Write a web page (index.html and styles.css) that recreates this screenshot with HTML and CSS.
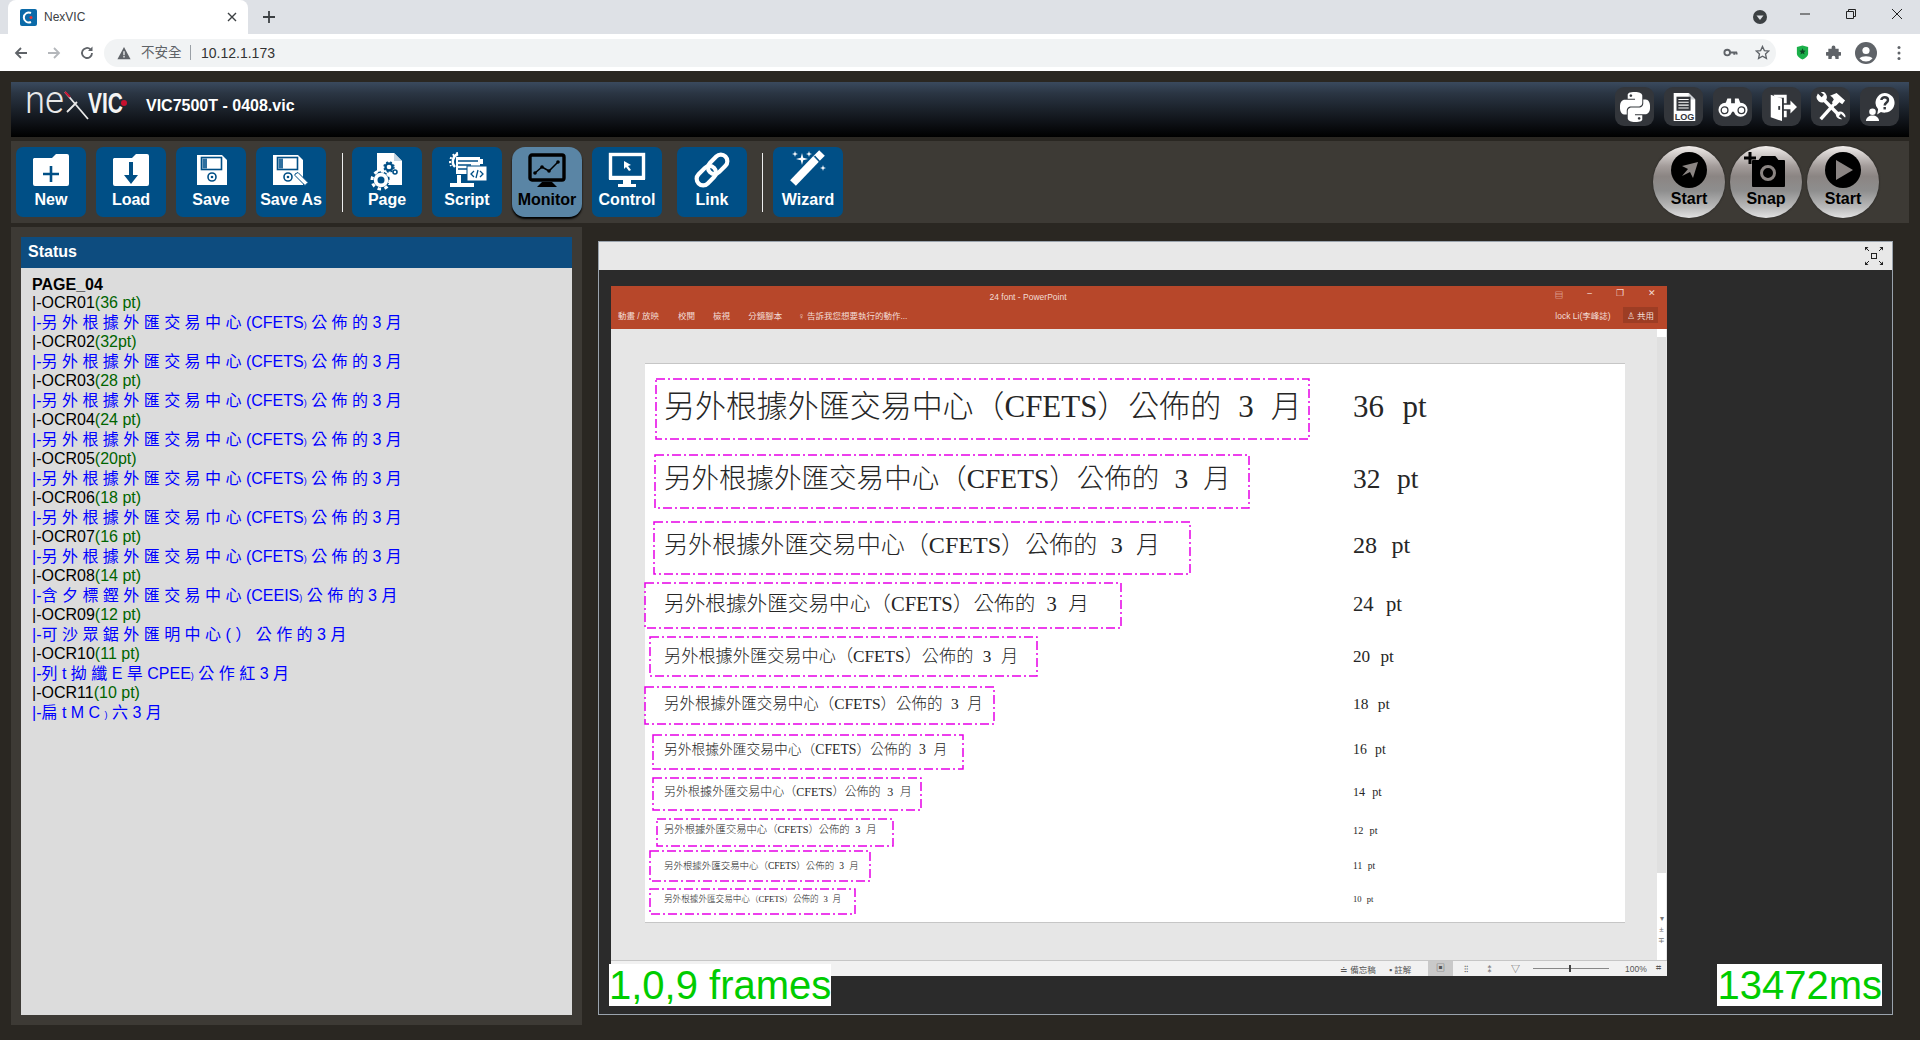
FILE: index.html
```html
<!DOCTYPE html>
<html lang="zh-Hant">
<head>
<meta charset="utf-8">
<title>NexVIC</title>
<link rel="stylesheet" href="styles.css">
</head>
<body>
<div class="tabstrip">
  <div class="tab">
    <svg class="favicon" viewBox="0 0 17 17"><rect width="17" height="17" rx="2" fill="#0b6aa8"/><path d="M11 4a5 5 0 1 0 0 9" fill="none" stroke="#fff" stroke-width="2"/><circle cx="11" cy="8.5" r="1.5" fill="#e33"/></svg>
    <span class="tab-title">NexVIC</span>
    <svg class="tab-close" viewBox="0 0 10 10"><path d="M1 1l8 8M9 1l-8 8" stroke="#3c4043" stroke-width="1.4"/></svg>
  </div>
  <svg class="newtab" viewBox="0 0 14 14"><path d="M7 1v12M1 7h12" stroke="#3c4043" stroke-width="1.8"/></svg>
  <div class="win-controls">
    <svg class="win-drop" viewBox="0 0 14 14"><circle cx="7" cy="7" r="7" fill="#3c4043"/><path d="M3.5 5.5h7L7 10z" fill="#dee1e6"/></svg>
    <svg class="win-btn" viewBox="0 0 12 12"><path d="M1 6h10" stroke="#222" stroke-width="1"/></svg>
    <svg class="win-btn" viewBox="0 0 12 12"><path d="M1.5 3.5h7v7h-7zM3.5 3.5v-2h7v7h-2" fill="none" stroke="#222"/></svg>
    <svg class="win-btn" viewBox="0 0 12 12"><path d="M1 1l10 10M11 1L1 11" stroke="#222"/></svg>
  </div>
</div>
<div class="urlbar">
  <svg class="nav" viewBox="0 0 16 16"><path d="M14 8H3M8 3L3 8l5 5" fill="none" stroke="#5f6368" stroke-width="1.8"/></svg>
  <svg class="nav" viewBox="0 0 16 16"><path d="M2 8h11M8 3l5 5-5 5" fill="none" stroke="#b4b7bb" stroke-width="1.8"/></svg>
  <svg class="nav" viewBox="0 0 16 16"><path d="M13 8a5 5 0 1 1-1.5-3.6" fill="none" stroke="#5f6368" stroke-width="1.8"/><path d="M13.5 1.5v4.5H9z" fill="#5f6368"/></svg>
  <div class="omnibox">
    <svg class="warn" viewBox="0 0 16 16"><path d="M8 1l7.5 14H.5z" fill="#5f6368"/><path d="M8 6v4.5M8 11.5v1.5" stroke="#f1f3f4" stroke-width="1.5"/></svg>
    <span class="insecure">不安全</span>
    <span class="url">10.12.1.173</span>
    <span class="omni-right">
      <svg class="omni-ic" viewBox="0 0 16 16"><circle cx="4.5" cy="8" r="3" fill="none" stroke="#5f6368" stroke-width="2"/><path d="M7 8h8M12 8v2.5M14.5 8v2" stroke="#5f6368" stroke-width="2"/></svg>
      <svg class="omni-ic" viewBox="0 0 16 16"><path d="M8 1.5l2 4.4 4.7.5-3.5 3.2 1 4.7L8 11.9l-4.200 2.400 1-4.700L1.300 6.400 6 5.900z" fill="none" stroke="#5f6368" stroke-width="1.400"/></svg>
    </span>
  </div>
  <div class="ext">
    <svg class="ext-ic ext-shield" viewBox="0 0 14 16"><path d="M1 2l6-1.500L13 2v7c0 3-3 5-6 6.500C4 14 1 12 1 9z" fill="#1bb04a"/><path d="M7 3.500l1 2.300 2.500.2-1.900 1.700.6 2.400L7 8.900l-2.200 1.200.6-2.400L3.500 6 6 5.800z" fill="#0c4a26"/></svg>
    <svg class="ext-ic" viewBox="0 0 16 16"><path d="M6 2.500a2 2 0 0 1 4 0V4h3.500v3.500H15a2 2 0 0 1 0 4h-1.500V15H10v-1.500a2 2 0 0 0-4 0V15H2.500v-3.500H1a2 2 0 0 1 0-4h1.500V4H6z" fill="#5f6368"/></svg>
    <svg class="ext-av" viewBox="0 0 22 22"><circle cx="11" cy="11" r="11" fill="#5f6368"/><circle cx="11" cy="8.500" r="3.600" fill="#fff"/><path d="M4.500 16.500c2-3 11-3 13 0a8.500 8.500 0 0 1-13 0z" fill="#fff"/></svg>
    <svg class="ext-menu" viewBox="0 0 4 16"><circle cx="2" cy="2.500" r="1.500" fill="#5f6368"/><circle cx="2" cy="8" r="1.500" fill="#5f6368"/><circle cx="2" cy="13.500" r="1.500" fill="#5f6368"/></svg>
  </div>
</div>

<div class="app">
  <header class="apphead">
    <svg class="logo" viewBox="0 0 104 34">
      <text x="1" y="25" class="logo-thin" textLength="39" lengthAdjust="spacingAndGlyphs">ne</text>
      <path d="M41 4l23 27M43 24l10-10" fill="none" stroke="#e9e9e9" stroke-width="1.800"/>
      <path d="M41 4l5 5" stroke="#c8102e" stroke-width="1.800"/>
      <text x="64" y="25" class="logo-bold" textLength="35" lengthAdjust="spacingAndGlyphs">VIC</text>
      <circle cx="100" cy="15" r="3" fill="#c8102e"/>
    </svg>
    <span class="filename">VIC7500T - 0408.vic</span>
    <nav class="tools">
      <div class="tile"><svg viewBox="0 0 24 24" class="tile-ic"><path fill="#fff" d="M14.25.18l.9.2.73.26.59.3.45.32.34.34.25.34.16.33.1.3.04.26.02.2-.01.13V8.5l-.05.63-.13.55-.21.46-.26.38-.3.31-.33.25-.35.19-.35.14-.33.1-.3.07-.26.04-.21.02H8.77l-.69.05-.59.14-.5.22-.41.27-.33.32-.27.35-.2.36-.15.37-.1.35-.07.32-.04.27-.02.21v3.06H3.17l-.21-.03-.28-.07-.32-.12-.35-.18-.36-.26-.36-.36-.35-.46-.32-.59-.28-.73-.21-.88-.14-1.05-.05-1.23.06-1.22.16-1.04.24-.87.32-.71.36-.57.4-.44.42-.33.42-.24.4-.16.36-.1.32-.05.24-.01h.16l.06.01h8.16v-.83H6.18l-.01-2.75-.02-.37.05-.34.11-.31.17-.28.25-.26.31-.23.38-.2.44-.18.51-.15.58-.12.64-.1.71-.06.77-.04.84-.02 1.27.05zm-6.3 1.98l-.23.33-.08.41.08.41.23.34.33.22.41.09.41-.09.33-.22.23-.34.08-.41-.08-.41-.23-.33-.33-.22-.41-.09-.41.09zm13.09 3.95l.28.06.32.12.35.18.36.27.36.35.35.47.32.59.28.73.21.88.14 1.04.05 1.23-.06 1.23-.16 1.04-.24.86-.32.71-.36.57-.4.45-.42.33-.42.24-.4.16-.36.09-.32.05-.24.02-.16-.01h-8.22v.82h5.84l.01 2.76.02.36-.05.34-.11.31-.17.29-.25.25-.31.24-.38.2-.44.17-.51.15-.58.13-.64.09-.71.07-.77.04-.84.01-1.27-.04-1.07-.14-.9-.2-.73-.25-.59-.3-.45-.33-.34-.34-.25-.34-.16-.33-.1-.3-.04-.25-.02-.2.01-.13v-5.34l.05-.64.13-.54.21-.46.26-.38.3-.32.33-.24.35-.2.35-.14.33-.1.3-.06.26-.04.21-.02.13-.01h5.84l.69-.05.59-.14.5-.21.41-.28.33-.32.27-.35.2-.36.15-.36.1-.35.07-.32.04-.28.02-.21V6.070h2.090l.14.010zm-6.470 14.250l-.23.33-.08.41.08.41.23.33.33.23.41.08.41-.08.33-.23.23-.33.08-.41-.08-.41-.23-.33-.33-.23-.41-.08-.41.08z"/></svg></div>
      <div class="tile"><svg viewBox="0 0 30 32" class="tile-ic"><path d="M4 1h16l7 7v23H4z" fill="#fff"/><path d="M20 1v7h7" fill="#cfd2d6"/><rect x="7" y="5" width="15" height="15" fill="#33363b"/><path d="M9 8h11M9 11h11M9 14h11M9 17h11" stroke="#fff" stroke-width="1.100"/><text x="15.500" y="30" class="log-text" text-anchor="middle" textLength="21" lengthAdjust="spacingAndGlyphs">LOG</text></svg></div>
      <div class="tile"><svg viewBox="0 0 32 24" class="tile-ic tile-wide"><path d="M10 3h4v5h4V3h4l3 8H7z" fill="#fff"/><circle cx="8" cy="15" r="7.500" fill="#fff"/><circle cx="24" cy="15" r="7.500" fill="#fff"/><rect x="13" y="9" width="6" height="8" fill="#fff"/><circle cx="7" cy="15.500" r="3.600" fill="none" stroke="#33363b" stroke-width="1.400"/><circle cx="25" cy="15.500" r="3.600" fill="none" stroke="#33363b" stroke-width="1.400"/></svg></div>
      <div class="tile"><svg viewBox="0 0 32 32" class="tile-ic"><path d="M4 3l12 4v24L4 27z" fill="#fff"/><path d="M7 3h14v9h-3V6H9zM21 20v7h-3v-7z" fill="#fff"/><rect x="12" y="15" width="2" height="4" fill="#33363b"/><path d="M18 13.500h7V9l7 7-7 7v-4.500h-7z" fill="#fff"/></svg></div>
      <div class="tile"><svg viewBox="0 0 32 32" class="tile-ic"><path d="M5 29L21 11" stroke="#fff" stroke-width="3.600"/><path d="M15 4l7-3 9 8-3 4-3-2-4 4-4-4 2-3c-1-2-2-3-4-4z" fill="#fff"/><path d="M8 8L25 25" stroke="#fff" stroke-width="3.600"/><path d="M2 1.500l4 4 2.500-2.500-4-3.500A6 6 0 0 1 11 8l-3 3A6 6 0 0 1 .500 5z" fill="#fff"/><path d="M30.500 27l-4-4-2.500 2.500 4 3.500A6 6 0 0 1 21 24l3-3a6 6 0 0 1 7.500 6z" fill="#fff"/></svg></div>
      <div class="tile"><svg viewBox="0 0 32 32" class="tile-ic"><path d="M21 1a10.500 10.500 0 1 1-4 20.200L13 24l1-5.500A10.500 10.500 0 0 1 21 1z" fill="#fff"/><path d="M17.500 8.500c0-4 7-4 7 0 0 3-3.500 3-3.500 6" fill="none" stroke="#33363b" stroke-width="2.600"/><rect x="19.700" y="16" width="2.600" height="2.600" fill="#33363b"/><circle cx="8" cy="21" r="3.500" fill="#fff"/><path d="M1 31c0-8 14-8 14 0z" fill="#fff"/></svg></div>
    </nav>
  </header>

  <section class="toolbar">
    <button class="btn"><svg viewBox="0 0 40 40"><path d="M3 7h18l4-4h11a2 2 0 0 1 2 2v28a2 2 0 0 1-2 2H4a2 2 0 0 1-2-2V8z" fill="#fff"/><path d="M20 15v16M12 23h16" stroke="#004f86" stroke-width="2.600"/></svg><span>New</span></button>
    <button class="btn"><svg viewBox="0 0 40 40"><path d="M3 7h18l4-4h11a2 2 0 0 1 2 2v28a2 2 0 0 1-2 2H4a2 2 0 0 1-2-2V8z" fill="#fff"/><path d="M18 11h4v13h5l-7 9-7-9h5z" fill="#004f86"/></svg><span>Load</span></button>
    <button class="btn"><svg viewBox="0 0 40 40"><path d="M6 4h25l5 5v25H6z" fill="#fff"/><rect x="10.500" y="6.500" width="20" height="12" fill="#fff" stroke="#004f86" stroke-width="1.600"/><rect x="11.500" y="7.500" width="4.500" height="10" fill="#2e6f9e"/><circle cx="21" cy="26" r="4" fill="none" stroke="#004f86" stroke-width="1.600"/><circle cx="21" cy="26" r="1.300" fill="#004f86"/></svg><span>Save</span></button>
    <button class="btn"><svg viewBox="0 0 40 40"><path d="M2 4h25l5 5v25H2z" fill="#fff"/><rect x="6.500" y="6.500" width="20" height="12" fill="#fff" stroke="#004f86" stroke-width="1.600"/><rect x="7.500" y="7.500" width="4.500" height="10" fill="#2e6f9e"/><circle cx="17" cy="26" r="4" fill="none" stroke="#004f86" stroke-width="1.600"/><circle cx="17" cy="26" r="1.300" fill="#004f86"/><path d="M24 23l3-1.500 10 10-3 3-10-10z" fill="#fff" stroke="#004f86" stroke-width="1"/></svg><span>Save As</span></button>
    <i class="sep"></i>
    <button class="btn"><svg viewBox="0 0 40 40"><path d="M10 2h17l8 8v24H10z" fill="#fff"/><path d="M27 2v8h8" fill="#c5d5e2"/><circle cx="14" cy="29" r="8" fill="#fff" stroke="#004f86" stroke-width="1.500"/><circle cx="14" cy="29" r="9" fill="none" stroke="#fff" stroke-width="3" stroke-dasharray="3.500 3.500"/><circle cx="14" cy="29" r="3.500" fill="#004f86"/><circle cx="22" cy="16" r="3.500" fill="none" stroke="#004f86" stroke-width="2.400"/><circle cx="22" cy="16" r="5" fill="none" stroke="#004f86" stroke-width="1.400" stroke-dasharray="2 2"/><circle cx="28" cy="21" r="2" fill="none" stroke="#004f86" stroke-width="1.600"/></svg><span>Page</span></button>
    <button class="btn"><svg viewBox="0 0 40 40"><path d="M11 3a8 8 0 0 0-3 13" fill="none" stroke="#fff" stroke-width="2.500"/><path d="M11 2a9 9 0 0 0-7 13" fill="none" stroke="#fff" stroke-width="2" stroke-dasharray="2 2"/><rect x="9" y="6" width="24" height="17" fill="#fff"/><path d="M11 10h20M11 14h13M11 18h13" stroke="#004f86" stroke-width="1.400"/><rect x="33" y="8" width="3" height="5" fill="#fff"/><rect x="20" y="15" width="20" height="15" fill="#fff" stroke="#004f86" stroke-width="1"/><path d="M27 20l-3 3 3 3M33 20l3 3-3 3M31 19l-2 8" fill="none" stroke="#004f86" stroke-width="1.300"/><rect x="10" y="24" width="4" height="9" fill="#fff"/><rect x="3" y="32" width="24" height="4" fill="#fff"/></svg><span>Script</span></button>
    <button class="btn btn-on"><svg viewBox="0 0 40 40"><rect x="3" y="4" width="34" height="25" rx="2" fill="none" stroke="#000" stroke-width="3.400"/><path d="M8 22l7-6 7 4 9-9" fill="none" stroke="#000" stroke-width="1.500"/><circle cx="8" cy="22" r="1.800"/><circle cx="15" cy="16" r="1.800"/><circle cx="22" cy="20" r="1.800"/><circle cx="31" cy="11" r="1.800"/><path d="M15 31h10l5 5H10z"/></svg><span>Monitor</span></button>
    <button class="btn"><svg viewBox="0 0 40 40"><rect x="3.500" y="3.500" width="33" height="23" fill="none" stroke="#fff" stroke-width="3.400"/><path d="M2 26h36v3H2zM16 29h8v4h5v3H11v-3h5z" fill="#fff"/><path d="M17 10l7 4-3 1 3 4-2 1-3-4-2 2z" fill="#fff"/></svg><span>Control</span></button>
    <button class="btn btn-link"><svg viewBox="0 0 40 40"><g fill="none" stroke="#fff" stroke-width="4.200" transform="rotate(-45 20 19)"><rect x="1" y="12.500" width="22" height="13" rx="6.500"/><rect x="17" y="12.500" width="22" height="13" rx="6.500"/></g></svg><span>Link</span></button>
    <i class="sep sep-b"></i>
    <button class="btn"><svg viewBox="0 0 40 40"><path d="M5 32L28 8" stroke="#fff" stroke-width="8"/><path d="M28 8l6-6" stroke="#fff" stroke-width="8"/><path d="M26.500 5l5.500 6" stroke="#004f86" stroke-width="1.400"/><path d="M14 2l1.200 4.800L20 8l-4.800 1.200L14 14l-1.200-4.800L8 8l4.800-1.200zM7 0l.7 2.300L10 3l-2.300.7L7 6l-.7-2.300L4 3l2.300-.7zM21 0l.7 2.300L24 3l-2.300.7L21 6l-.7-2.300L18 3l2.300-.7zM35 14l.7 2.300L38 17l-2.300.7L35 20l-.7-2.300L32 17l2.300-.7z" fill="#fff"/></svg><span>Wizard</span></button>
    <div class="rounds">
      <button class="round"><svg viewBox="0 0 36 36"><circle cx="18" cy="18" r="18" fill="#000"/><path d="M27 10l-5 16-3-6-8 4 6-7-6-3z" fill="#8b8583"/></svg><span>Start</span></button>
      <button class="round"><svg viewBox="0 0 40 36" class="snap-ic"><path d="M9 9h6l3-4h13l3 4h6v25H9z" fill="#000" stroke="#000" stroke-linejoin="round" stroke-width="2"/><circle cx="24" cy="21" r="6.500" fill="none" stroke="#8b8583" stroke-width="3"/><path d="M6 0v12M0 6h12" stroke="#000" stroke-width="3"/></svg><span>Snap</span></button>
      <button class="round"><svg viewBox="0 0 36 36"><circle cx="18" cy="18" r="18" fill="#000"/><path d="M11 8l17 10-17 10z" fill="#8b8583"/></svg><span>Start</span></button>
    </div>
  </section>

  <main class="main">
    <aside class="status-wrap">
      <div class="status">
        <h2 class="status-head">Status</h2>
        <div class="status-body">
          <div class="page-name">PAGE_04</div>
          <div class="rn">|-OCR01<em>(36 pt)</em></div>
          <div class="rv">|-另 外 根 據 外 匯 交 易 中 心 (CFETS<small>)</small> 公 佈 的 3 月</div>
          <div class="rn">|-OCR02<em>(32pt)</em></div>
          <div class="rv">|-另 外 根 據 外 匯 交 易 中 心 (CFETS<small>)</small> 公 佈 的 3 月</div>
          <div class="rn">|-OCR03<em>(28 pt)</em></div>
          <div class="rv">|-另 外 根 據 外 匯 交 易 中 心 (CFETS<small>)</small> 公 佈 的 3 月</div>
          <div class="rn">|-OCR04<em>(24 pt)</em></div>
          <div class="rv">|-另 外 根 據 外 匯 交 易 中 心 (CFETS<small>)</small> 公 佈 的 3 月</div>
          <div class="rn">|-OCR05<em>(20pt)</em></div>
          <div class="rv">|-另 外 根 據 外 匯 交 易 中 心 (CFETS<small>)</small> 公 佈 的 3 月</div>
          <div class="rn">|-OCR06<em>(18 pt)</em></div>
          <div class="rv">|-另 外 根 據 外 匯 交 易 巾 心 (CFETS<small>)</small> 公 佈 的 3 月</div>
          <div class="rn">|-OCR07<em>(16 pt)</em></div>
          <div class="rv">|-另 外 根 據 外 匯 交 易 中 心 (CFETS<small>)</small> 公 佈 的 3 月</div>
          <div class="rn">|-OCR08<em>(14 pt)</em></div>
          <div class="rv">|-含 夕 標 鏗 外 匯 交 易 中 心 (CEEIS<small>)</small> 公 佈 的 3 月</div>
          <div class="rn">|-OCR09<em>(12 pt)</em></div>
          <div class="rv">|-可 沙 眾 鋸 外 匯 明 中 心 ( ） 公 作 的 3 月</div>
          <div class="rn">|-OCR10<em>(11 pt)</em></div>
          <div class="rv">|-列 t 拗 纖 E 旱 CPEE<small>)</small> 公 作 紅 3 月</div>
          <div class="rn">|-OCR11<em>(10 pt)</em></div>
          <div class="rv">|-扁 t M C <small>)</small> 六 3 月</div>
        </div>
      </div>
    </aside>

    <section class="view">
      <div class="view-bar">
        <svg class="fit-ic" viewBox="0 0 20 20"><rect x="7.500" y="7.500" width="5" height="5" fill="none" stroke="#222"/><path d="M1 1l4 4M19 1l-4 4M1 19l4-4M19 19l-4-4" stroke="#222"/><path d="M1 1h3.500L1 4.500zM19 1h-3.500L19 4.500zM1 19h3.500L1 15.500zM19 19h-3.500l3.500-3.500z" fill="#222"/></svg>
      </div>
      <div class="view-body">
        <div class="shot">
          <div class="ppt-title">
            <div class="ppt-r1">
              <span class="ppt-name">24 font - PowerPoint</span>
              <span class="ppt-wins"><b>▤</b><b>–</b><b>❐</b><b>✕</b></span>
            </div>
            <div class="ppt-r2">
              <span class="t1">動畫 / 放映</span><span class="t2">校閱</span><span class="t3">檢視</span><span class="t4">分鏡腳本</span><span class="t5">♀ 告訴我您想要執行的動作...</span>
              <span class="ppt-user">lock Li(李峰誌)</span><span class="ppt-share">♙ 共用</span>
            </div>
          </div>
          <div class="ppt-work">
            <div class="slide">
              <div class="roi r1"><svg><rect width="100%" height="100%"/></svg></div>
              <div class="roi r2"><svg><rect width="100%" height="100%"/></svg></div>
              <div class="roi r3"><svg><rect width="100%" height="100%"/></svg></div>
              <div class="roi r4"><svg><rect width="100%" height="100%"/></svg></div>
              <div class="roi r5"><svg><rect width="100%" height="100%"/></svg></div>
              <div class="roi r6"><svg><rect width="100%" height="100%"/></svg></div>
              <div class="roi r7"><svg><rect width="100%" height="100%"/></svg></div>
              <div class="roi r8"><svg><rect width="100%" height="100%"/></svg></div>
              <div class="roi r9"><svg><rect width="100%" height="100%"/></svg></div>
              <div class="roi r10"><svg><rect width="100%" height="100%"/></svg></div>
              <div class="roi r11"><svg><rect width="100%" height="100%"/></svg></div>
              <div class="line l1"><span class="zh">另外根據外匯交易中心（CFETS）公佈的 3 月</span><span class="pt">36 pt</span></div>
              <div class="line l2"><span class="zh">另外根據外匯交易中心（CFETS）公佈的 3 月</span><span class="pt">32 pt</span></div>
              <div class="line l3"><span class="zh">另外根據外匯交易中心（CFETS）公佈的 3 月</span><span class="pt">28 pt</span></div>
              <div class="line l4"><span class="zh">另外根據外匯交易中心（CFETS）公佈的 3 月</span><span class="pt">24 pt</span></div>
              <div class="line l5"><span class="zh">另外根據外匯交易中心（CFETS）公佈的 3 月</span><span class="pt">20 pt</span></div>
              <div class="line l6"><span class="zh">另外根據外匯交易中心（CFETS）公佈的 3 月</span><span class="pt">18 pt</span></div>
              <div class="line l7"><span class="zh">另外根據外匯交易中心（CFETS）公佈的 3 月</span><span class="pt">16 pt</span></div>
              <div class="line l8"><span class="zh">另外根據外匯交易中心（CFETS）公佈的 3 月</span><span class="pt">14 pt</span></div>
              <div class="line l9"><span class="zh">另外根據外匯交易中心（CFETS）公佈的 3 月</span><span class="pt">12 pt</span></div>
              <div class="line l10"><span class="zh">另外根據外匯交易中心（CFETS）公佈的 3 月</span><span class="pt">11 pt</span></div>
              <div class="line l11"><span class="zh">另外根據外匯交易中心（CFETS）公佈的 3 月</span><span class="pt">10 pt</span></div>
            </div>
            <div class="scroll"><i class="thumb"></i><i class="sbtn">▾</i><i class="sbtn">±</i><i class="sbtn">∓</i></div>
          </div>
          <div class="ppt-status">
            <span class="s-note">≐ 備忘稿</span><span class="s-note s-cmt">▪ 註解</span>
            <span class="s-view s-on">▣</span><span class="s-view">⁝⁝</span><span class="s-view">⁑</span><span class="s-view">▽</span>
            <span class="s-slider"><i></i></span><span class="s-zoom">100%</span><span class="s-fit">⌗</span>
          </div>
        </div>
        <div class="badge badge-l">1,0,9 frames</div>
        <div class="badge badge-r">13472ms</div>
      </div>
    </section>
  </main>
</div>
</body>
</html>
```

FILE: styles.css
```css
* { box-sizing: border-box; }
html, body { margin: 0; height: 100%; }
body {
  width: 1920px; height: 1040px; overflow: hidden;
  background: #2a2722;
  font-family: "Liberation Sans", "Noto Sans CJK TC", sans-serif;
  display: flex; flex-direction: column;
}
svg { display: block; }

/* browser chrome */
.tabstrip { height: 34px; background: #dee1e6; display: flex; align-items: stretch; flex: none; }
.tab { margin-left: 8px; width: 240px; background: #fff; border-radius: 8px 8px 0 0; display: flex; align-items: center; padding-left: 12px; }
.favicon { width: 17px; height: 17px; }
.tab-title { margin-left: 7px; font-size: 12px; color: #3c4043; flex: 1; font-family: "Liberation Sans", sans-serif; }
.tab-close { width: 10px; height: 10px; margin-right: 11px; }
.newtab { width: 14px; height: 14px; align-self: center; margin-left: 14px; }
.win-controls { margin-left: auto; display: flex; align-items: center; }
.win-drop { width: 14px; height: 14px; margin-right: 32px; }
.win-btn { width: 12px; height: 12px; margin-right: 34px; position: relative; top: -3px; }
.win-btn:last-child { margin-right: 17px; }

.urlbar { height: 37px; background: #fff; display: flex; align-items: center; flex: none; }
.nav { width: 16px; height: 16px; margin-left: 13px; margin-right: 4px; }
.nav + .nav { margin-left: 13px; }
.omnibox { margin-left: 5px; width: 1672px; height: 28px; background: #f1f3f4; border-radius: 14px; display: flex; align-items: center; padding-left: 13px; font-size: 13px; color: #5f6368; }
.warn { width: 14px; height: 14px; }
.insecure { margin-left: 10px; padding-right: 7px; border-right: 1px solid #9aa0a6; line-height: 15px; font-size: 13.500px; width: 50px; white-space: nowrap; }
.url { margin-left: 10px; font-size: 14px; color: #333; }
.omni-right { margin-left: auto; display: flex; align-items: center; gap: 17px; margin-right: 6px; }
.omni-ic { width: 15px; height: 15px; }
.ext { display: flex; align-items: center; margin-left: 19px; }
.ext-ic { width: 15px; height: 15px; margin-right: 14px; }
.ext-shield { margin-right: 16px; }
.ext-av { width: 22px; height: 22px; margin-right: 20px; }
.ext-menu { width: 4px; height: 16px; }

/* app */
.app { flex: 1; padding: 11px 11px 0; display: flex; flex-direction: column; }
.apphead {
  height: 55px; display: flex; align-items: flex-start;
  background: linear-gradient(#3a4a5e 0%, #2b3644 20%, #11151b 68%, #000 100%);
}
.logo { width: 104px; height: 34px; margin: 6px 0 0 13px; overflow: visible; }
.logo-thin { font: 300 38px "Roboto", sans-serif; fill: #e9e9e9; }
.logo-bold { font: 700 29px "Liberation Sans", sans-serif; fill: #f4f4f4; }
.filename { margin: 15px 0 0 18px; font-size: 16px; font-weight: 700; color: #fff; line-height: 18px; }
.tools { margin-left: auto; margin-top: 5px; margin-right: 10px; display: flex; gap: 10px; }
.tile { width: 39px; height: 39px; border-radius: 9px; background: #33363b; display: flex; align-items: center; justify-content: center; }
.tile-ic { width: 30px; height: 30px; }
.tile-wide { height: 24px; }
.log-text { font: 700 10px "Liberation Sans", sans-serif; fill: #33363b; }

.toolbar { margin-top: 4px; height: 82px; background: #3d3a35; padding: 6px 30px 0 5px; display: flex; align-items: flex-start; gap: 10px; }
.btn {
  width: 70px; height: 70px; border: 0; padding: 4px 0 0; margin: 0; border-radius: 7px;
  background: #004f86; color: #fff; font: 700 16px/18px "Liberation Sans", sans-serif;
  display: flex; flex-direction: column; align-items: center;
}
.btn svg { width: 40px; height: 40px; overflow: visible; }
.btn-on { background: #5a85a5; color: #000; border-radius: 13px; box-shadow: 0 2px 2px #000; }
.btn-link { margin-left: 5px; }
.sep { width: 1px; height: 59px; background: #eee; margin: 6px -1px 0 6px; flex: none; }
.sep-b { margin-left: 5px; margin-right: 0; }
.rounds { margin-left: auto; margin-top: -1px; display: flex; gap: 5px; }
.round {
  width: 72px; height: 72px; border: 0; padding: 6px 0 0; border-radius: 50%;
  background: linear-gradient(#f2eeec 0%, #a39c9a 28%, #8b8583 42%, #8e8e8e 62%, #b9b9b9 85%, #e2e2e2 100%);
  box-shadow: 0 0 2px #222;
  color: #000; font: 700 16px/18px "Liberation Sans", sans-serif;
  display: flex; flex-direction: column; align-items: center;
}
.round svg { width: 36px; height: 36px; overflow: visible; }
.round .snap-ic { width: 40px; height: 36px; margin-left: -4px; }
.round span { margin-top: 2px; }

.main { display: flex; align-items: flex-start; margin-top: 4px; }
.status-wrap { width: 571px; height: 798px; background: #3d3a35; padding: 10px; flex: none; }
.status { height: 100%; background: #dcdcdc; display: flex; flex-direction: column; }
.status-head { margin: 0; height: 31px; background: #0d4c7f; color: #fff; font-size: 16px; line-height: 30px; font-weight: 700; padding-left: 7px; }
.status-body { padding: 8px 0 0 11px; font-size: 16px; color: #000; }
.page-name { font-weight: 700; height: 18px; line-height: 18px; }
.rn { height: 18px; line-height: 18px; }
.rn em { font-style: normal; color: #006400; }
.rv { height: 21px; line-height: 21px; color: #00f; white-space: nowrap; }
.rv small { font-size: 9px; }

.view { margin: 14px 0 0 16px; width: 1295px; height: 774px; border: 1px solid #9aa3ad; background: #2b2b2b; display: flex; flex-direction: column; }
.view-bar { height: 28px; background: #e8e8e8; display: flex; justify-content: flex-end; align-items: center; padding-right: 8px; flex: none; }
.fit-ic { width: 20px; height: 20px; }
.view-body { position: relative; flex: 1; padding: 16px 0 0 12px; }
.shot { width: 1056px; height: 690px; display: flex; flex-direction: column; background: #e6e6e6; }
.ppt-title { height: 43px; background: #b7472a; color: #f3ddd6; font-size: 8.500px; flex: none; }
.ppt-r1 { height: 21px; display: flex; align-items: center; justify-content: center; position: relative; padding-right: 222px; }
.ppt-wins { position: absolute; right: 11px; top: 2px; display: flex; gap: 24px; font-weight: 400; }
.ppt-wins b { font-weight: 400; }
.ppt-r2 { height: 22px; display: flex; align-items: center; white-space: nowrap; padding: 0 0 6px 7px; }
.t2 { margin-left: 19px; } .t3 { margin-left: 18px; } .t4 { margin-left: 18px; } .t5 { margin-left: 16px; }
.ppt-user { margin-left: auto; }
.ppt-share { margin: 0 9px 0 12px; padding: 2px 4px; background: #9d3d24; }
.ppt-work { position: relative; height: 631px; padding: 34px 0 0 34px; flex: none; }
.slide { position: relative; width: 980px; height: 560px; background: #fff; border-top: 1px solid #c6c6c6; border-bottom: 1px solid #c6c6c6; font-family: "Liberation Serif", "Noto Sans CJK TC", serif; color: #262626; font-weight: 300; }
.scroll { position: absolute; right: 1px; top: 0; width: 9px; height: 631px; display: flex; flex-direction: column; align-items: center; background: #fff; }
.thumb { display: block; margin-top: 8px; width: 9px; height: 536px; background: #e0e0e0; }
.sbtn { margin-top: 0; font: normal 8px/11px "Liberation Sans", sans-serif; color: #777; }
.thumb + .sbtn { margin-top: 40px; }
.ppt-status { height: 16px; background: #f1f1f1; border-top: 1px solid #c6c6c6; display: flex; align-items: center; justify-content: flex-end; font-size: 8.500px; color: #555; position: relative; white-space: nowrap; flex: none; }
.s-note { position: absolute; left: 729px; }
.s-cmt { left: 778px; }
.s-view { position: absolute; left: 817px; width: 25px; text-align: center; font-size: 9px; }
.s-view + .s-view { left: 842px; background: none; }
.s-view + .s-view + .s-view { left: 866px; }
.s-view + .s-view + .s-view + .s-view { left: 892px; }
.s-on { background: #c9c9c9; height: 15px; }
.s-slider { position: absolute; left: 922px; top: 7px; width: 76px; height: 1px; background: #888; }
.s-slider i { position: absolute; left: 36px; top: -3px; width: 2px; height: 7px; background: #444; }
.s-zoom { position: absolute; left: 1014px; }
.s-fit { position: absolute; left: 1045px; }

.roi { position: absolute; }
.roi svg { width: 100%; height: 100%; overflow: visible; display: block; }
.roi rect { fill: none; stroke: #e600e6; stroke-width: 1.500; stroke-dasharray: 9 3 2 3; }
.r1 { left: 11px; top: 15px; width: 653px; height: 60px; }
.r2 { left: 10px; top: 91px; width: 594px; height: 53px; }
.r3 { left: 9px; top: 158px; width: 536px; height: 52px; }
.r4 { left: 0; top: 219px; width: 476px; height: 45px; }
.r5 { left: 5px; top: 273px; width: 387px; height: 39px; }
.r6 { left: 0; top: 323px; width: 349px; height: 37px; }
.r7 { left: 8px; top: 371px; width: 310px; height: 34px; }
.r8 { left: 8px; top: 414px; width: 268px; height: 32px; }
.r9 { left: 12px; top: 455px; width: 236px; height: 27px; }
.r10 { left: 5px; top: 487px; width: 220px; height: 30px; }
.r11 { left: 5px; top: 525px; width: 205px; height: 25px; }

.line { position: absolute; left: 19px; height: 40px; display: flex; align-items: center; white-space: nowrap; font-size: calc(var(--pt) * 0.86px); word-spacing: .3em; }
.zh { width: 689px; margin-bottom: .24em; }
.pt { word-spacing: .35em; }
.l1 { --pt: 36; top: 23px; } .l2 { --pt: 32; top: 95px; } .l3 { --pt: 28; top: 161px; }
.l4 { --pt: 24; top: 220px; } .l5 { --pt: 20; top: 273px; } .l6 { --pt: 18; top: 320px; }
.l7 { --pt: 16; top: 366px; } .l8 { --pt: 14; top: 408px; } .l9 { --pt: 12; top: 446px; }
.l10 { --pt: 11; top: 482px; } .l11 { --pt: 10; top: 515px; }

.badge { position: absolute; bottom: 8px; height: 42px; line-height: 42px; background: #fff; color: #00cc00; font-size: 40px; white-space: nowrap; }
.badge-l { left: 10px; }
.badge-r { right: 10px; }
```
